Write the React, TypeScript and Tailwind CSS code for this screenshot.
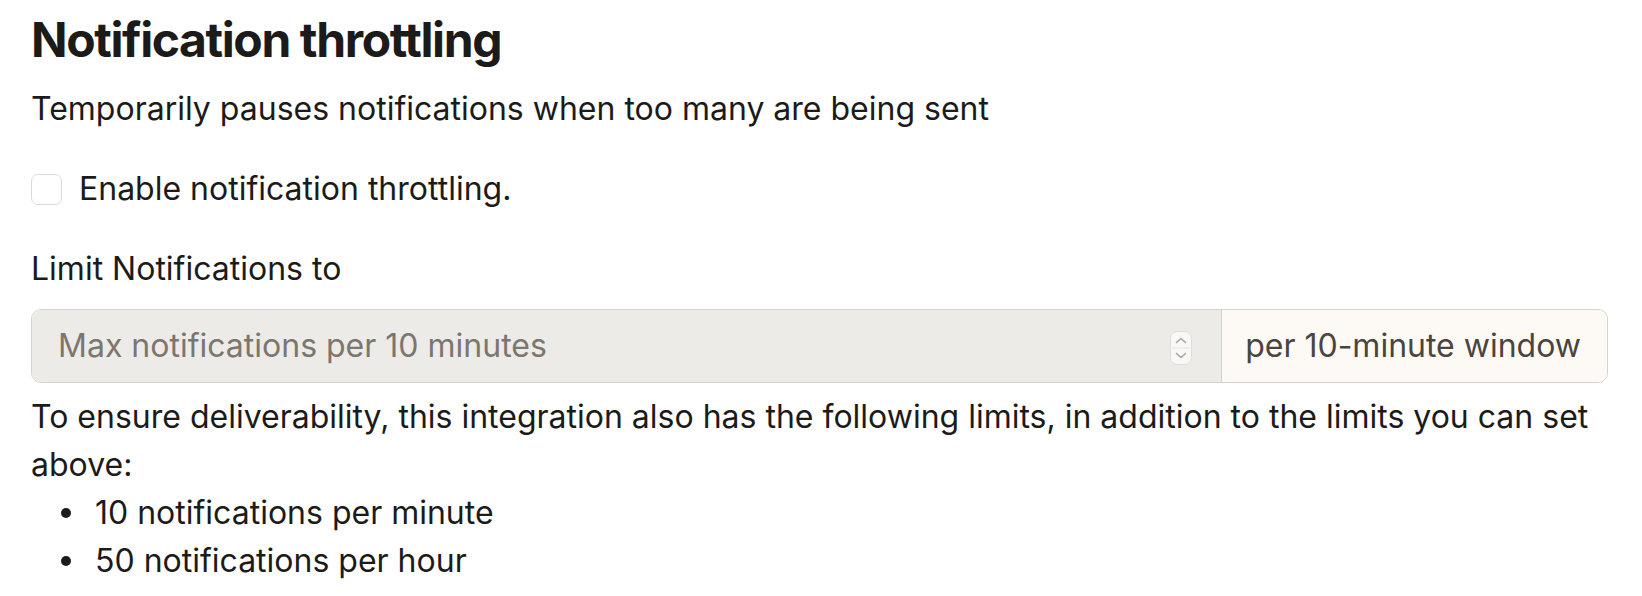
import React from "react";

function Stepper() {
  return (
    <svg width="22" height="34" viewBox="0 0 22 34" className="shrink-0 mt-[4px]">
      <rect x="0.5" y="0.5" width="21" height="33" rx="7" fill="#f9f8f6" stroke="#e0ddd8" />
      <line x1="2" y1="17" x2="20" y2="17" stroke="#e4e1dc" />
      <path d="M6.5 11.5 L11 7.5 L15.5 11.5" fill="none" stroke="#a9a6a2" strokeWidth="1.6" strokeLinecap="round" strokeLinejoin="round" />
      <path d="M6.5 22.5 L11 26.5 L15.5 22.5" fill="none" stroke="#a9a6a2" strokeWidth="1.6" strokeLinecap="round" strokeLinejoin="round" />
    </svg>
  );
}

const limits = ["10 notifications per minute", "50 notifications per hour"];

export default function App() {
  return (
    <div className="min-h-screen bg-white pl-[31px] pr-[34px] pt-[12px] text-[#1c1b1a] font-['Inter','Noto_Sans',sans-serif]">
      <h1 className="text-[48px] font-bold tracking-[-0.029em] leading-[56px]">Notification throttling</h1>
      <p className="mt-[17px] text-[32px] leading-[48px]">Temporarily pauses notifications when too many are being sent</p>

      <label className="mt-[32px] flex items-center gap-[17px] text-[32px] leading-[48px]">
        <span className="w-[31px] h-[31px] rounded-[7px] border border-[#dedbd6] bg-white shrink-0" />
        Enable notification throttling.
      </label>

      <div className="mt-[32px] text-[32px] leading-[48px]">Limit Notifications to</div>

      <div className="mt-[16px] flex h-[74px] rounded-[10px] border border-[#d6d2cc] overflow-hidden">
        <div className="flex flex-1 items-center bg-[#edebe7] pl-[26px] pr-[29px]">
          <span className="flex-1 text-[32px] text-[#7b766f]">Max notifications per 10 minutes</span>
          <Stepper />
        </div>
        <div className="flex items-center border-l border-[#d6d2cc] bg-[#fdfaf6] pl-[23px] pr-[26px] text-[32px] text-[#4a4540]">
          per 10-minute window
        </div>
      </div>

      <p className="mt-[10px] text-[32px] leading-[48px]">
        To ensure deliverability, this integration also has the following limits, in addition to the limits you can set above:
      </p>
      <ul className="text-[32px] leading-[48px]">
        {limits.map((l) => (
          <li key={l} className="flex items-center pl-[30px]">
            <span className="w-[10px] h-[10px] rounded-full bg-[#1c1b1a] mr-[24px] shrink-0" />
            {l}
          </li>
        ))}
      </ul>
    </div>
  );
}
